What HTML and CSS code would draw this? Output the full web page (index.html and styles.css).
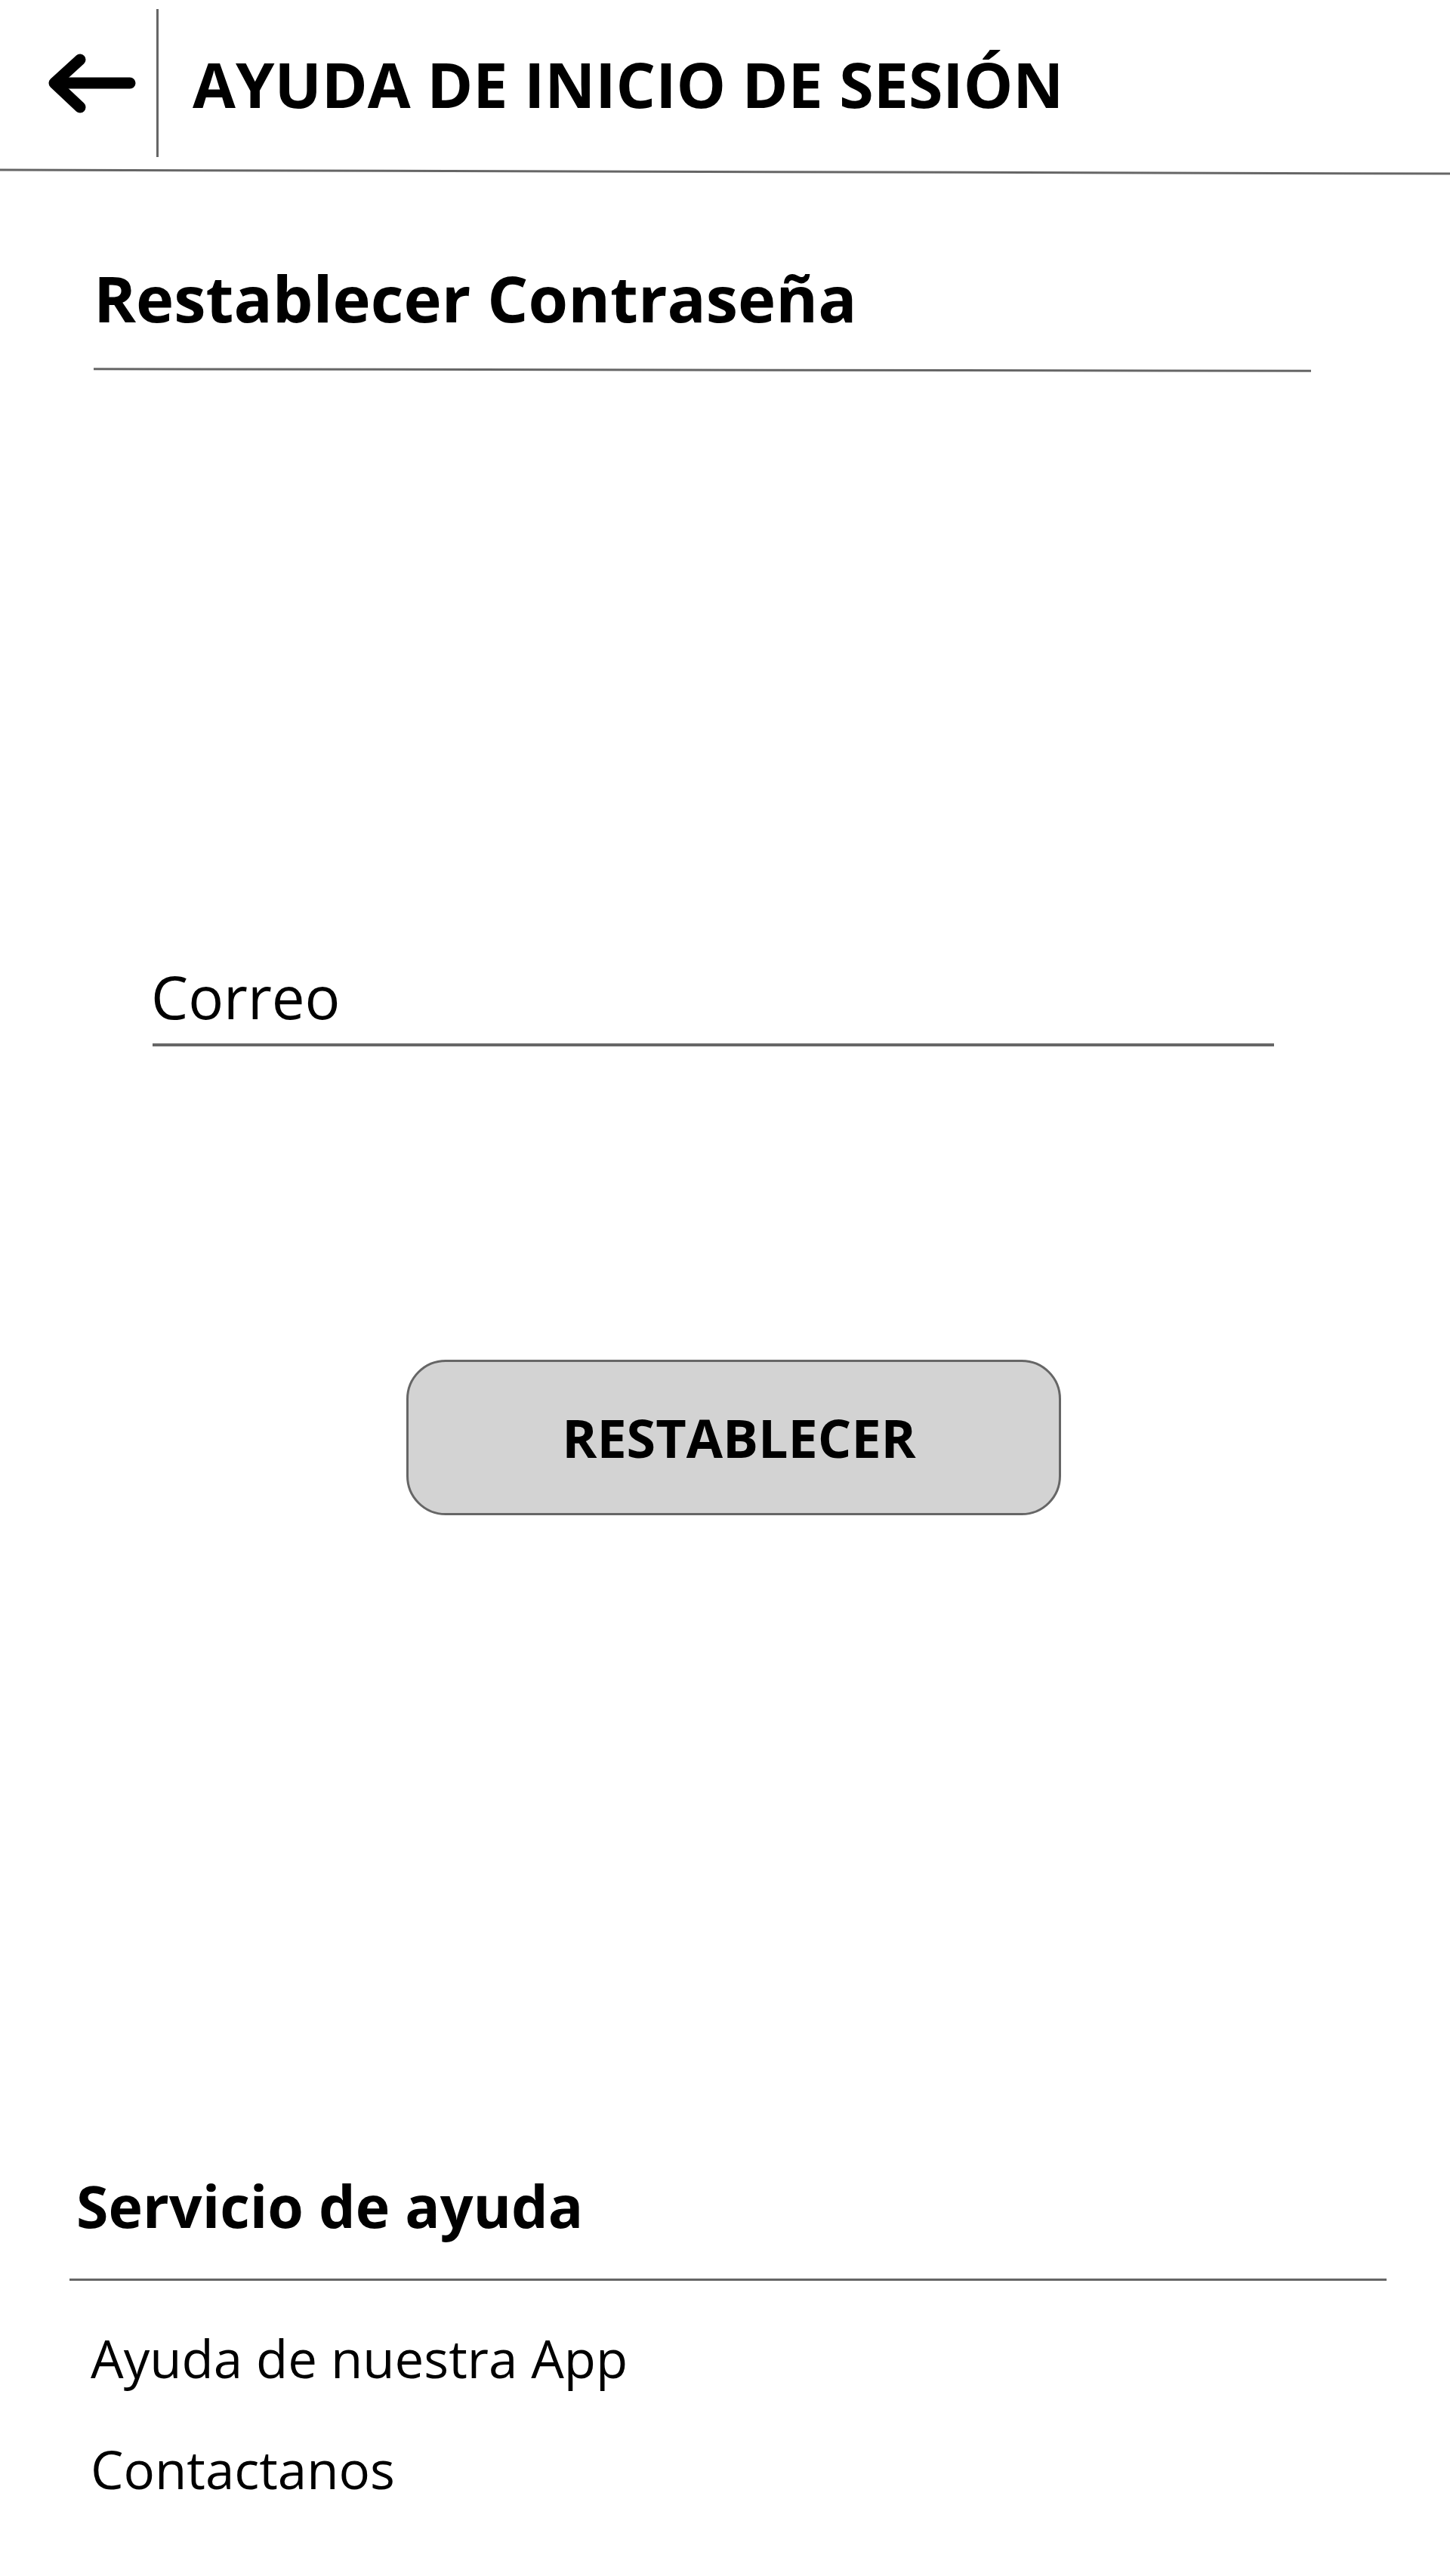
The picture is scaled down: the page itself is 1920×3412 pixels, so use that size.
FILE: index.html
```html
<!DOCTYPE html>
<html lang="es">
<head>
<meta charset="utf-8">
<title>Ayuda de inicio de sesión</title>
<link rel="stylesheet" href="styles.css">
</head>
<body>
<header class="topbar">
  <div class="back">
    <svg class="back-icon" width="207" height="222" viewBox="0 0 207 222" aria-hidden="true">
      <polyline points="106,79 72,110 106,142" fill="none" stroke="#000" stroke-width="15" stroke-linecap="round" stroke-linejoin="round"/>
      <line x1="73" y1="110" x2="172" y2="110" stroke="#000" stroke-width="15" stroke-linecap="round"/>
    </svg>
  </div>
  <div class="divider"></div>
  <h1 class="title">AYUDA DE INICIO DE SESIÓN</h1>
</header>
<svg class="rule-top" viewBox="0 0 1920 10" preserveAspectRatio="none" aria-hidden="true">
  <line x1="0" y1="3" x2="1920" y2="8" stroke="#666" stroke-width="3"/>
</svg>

<main class="reset">
  <h2 class="reset-title">Restablecer Contraseña</h2>
  <svg class="rule-title" viewBox="0 0 1612 6" preserveAspectRatio="none" aria-hidden="true">
    <line x1="0" y1="1.8" x2="1612" y2="4.2" stroke="#666" stroke-width="3"/>
  </svg>

  <div class="field">
    <span class="field-label">Correo</span>
  </div>

  <button class="btn" type="button">RESTABLECER</button>
</main>

<section class="help">
  <h3 class="help-title">Servicio de ayuda</h3>
  <div class="help-rule"></div>
  <a class="help-link first">Ayuda de nuestra App</a>
  <a class="help-link">Contactanos</a>
</section>
</body>
</html>
```

FILE: styles.css
```css
html, body {
  margin: 0;
  padding: 0;
  background: #fff;
}

body {
  font-family: "Open Sans", "Noto Sans", "DejaVu Sans", sans-serif;
  color: #000;
  width: 1920px;
  min-height: 3412px;
}

.title,
.reset-title,
.help-title,
.btn {
  font-family: "Open Sans", "Noto Sans", "DejaVu Sans", sans-serif;
  font-weight: 700;
}

.topbar {
  display: flex;
  align-items: center;
  height: 222px;
}

.back {
  width: 207px;
  height: 222px;
  flex: none;
}

.back-icon {
  display: block;
  filter: blur(0.6px);
}

.divider {
  width: 3px;
  height: 196px;
  background: #666;
  flex: none;
  margin-top: -2px;
}

.title {
  margin: 0 0 0 45px;
  font-size: 82.5px;
  line-height: 100px;
}

.rule-top {
  display: block;
  width: 1920px;
  height: 10px;
}

.reset {
  display: flex;
  flex-direction: column;
  align-items: flex-start;
}

.reset-title {
  margin: 112px 0 0 124px;
  font-size: 85px;
  line-height: 100px;
}

.rule-title {
  display: block;
  margin: 43px 0 0 124px;
  width: 1612px;
  height: 6px;
}

.field {
  margin: 777px 0 0 202px;
  width: 1485px;
  padding-bottom: 12px;
  border-bottom: 4px solid #666;
}

.field-label {
  display: block;
  font-size: 78px;
  line-height: 100px;
  margin-left: -2px;
}

.btn {
  margin: 415px 0 0 538px;
  width: 867px;
  height: 206px;
  box-sizing: border-box;
  border: 3px solid #666;
  border-radius: 52px;
  background: #d3d3d3;
  font-size: 70px;
  color: #000;
  padding: 0 0 0 14px;
  line-height: 100px;
}

.help {
  display: flex;
  flex-direction: column;
  align-items: flex-start;
  margin: 865px 0 0 92px;
}

.help-title {
  margin: 0 0 0 9px;
  font-size: 77px;
  line-height: 100px;
}

.help-rule {
  margin-top: 46px;
  width: 1744px;
  height: 3px;
  background: #666;
}

.help-link {
  display: block;
  margin: 47px 0 0 28px;
  font-size: 69px;
  line-height: 100px;
  color: #000;
  text-decoration: none;
}

.help-link.first {
  margin-top: 52px;
}
```
